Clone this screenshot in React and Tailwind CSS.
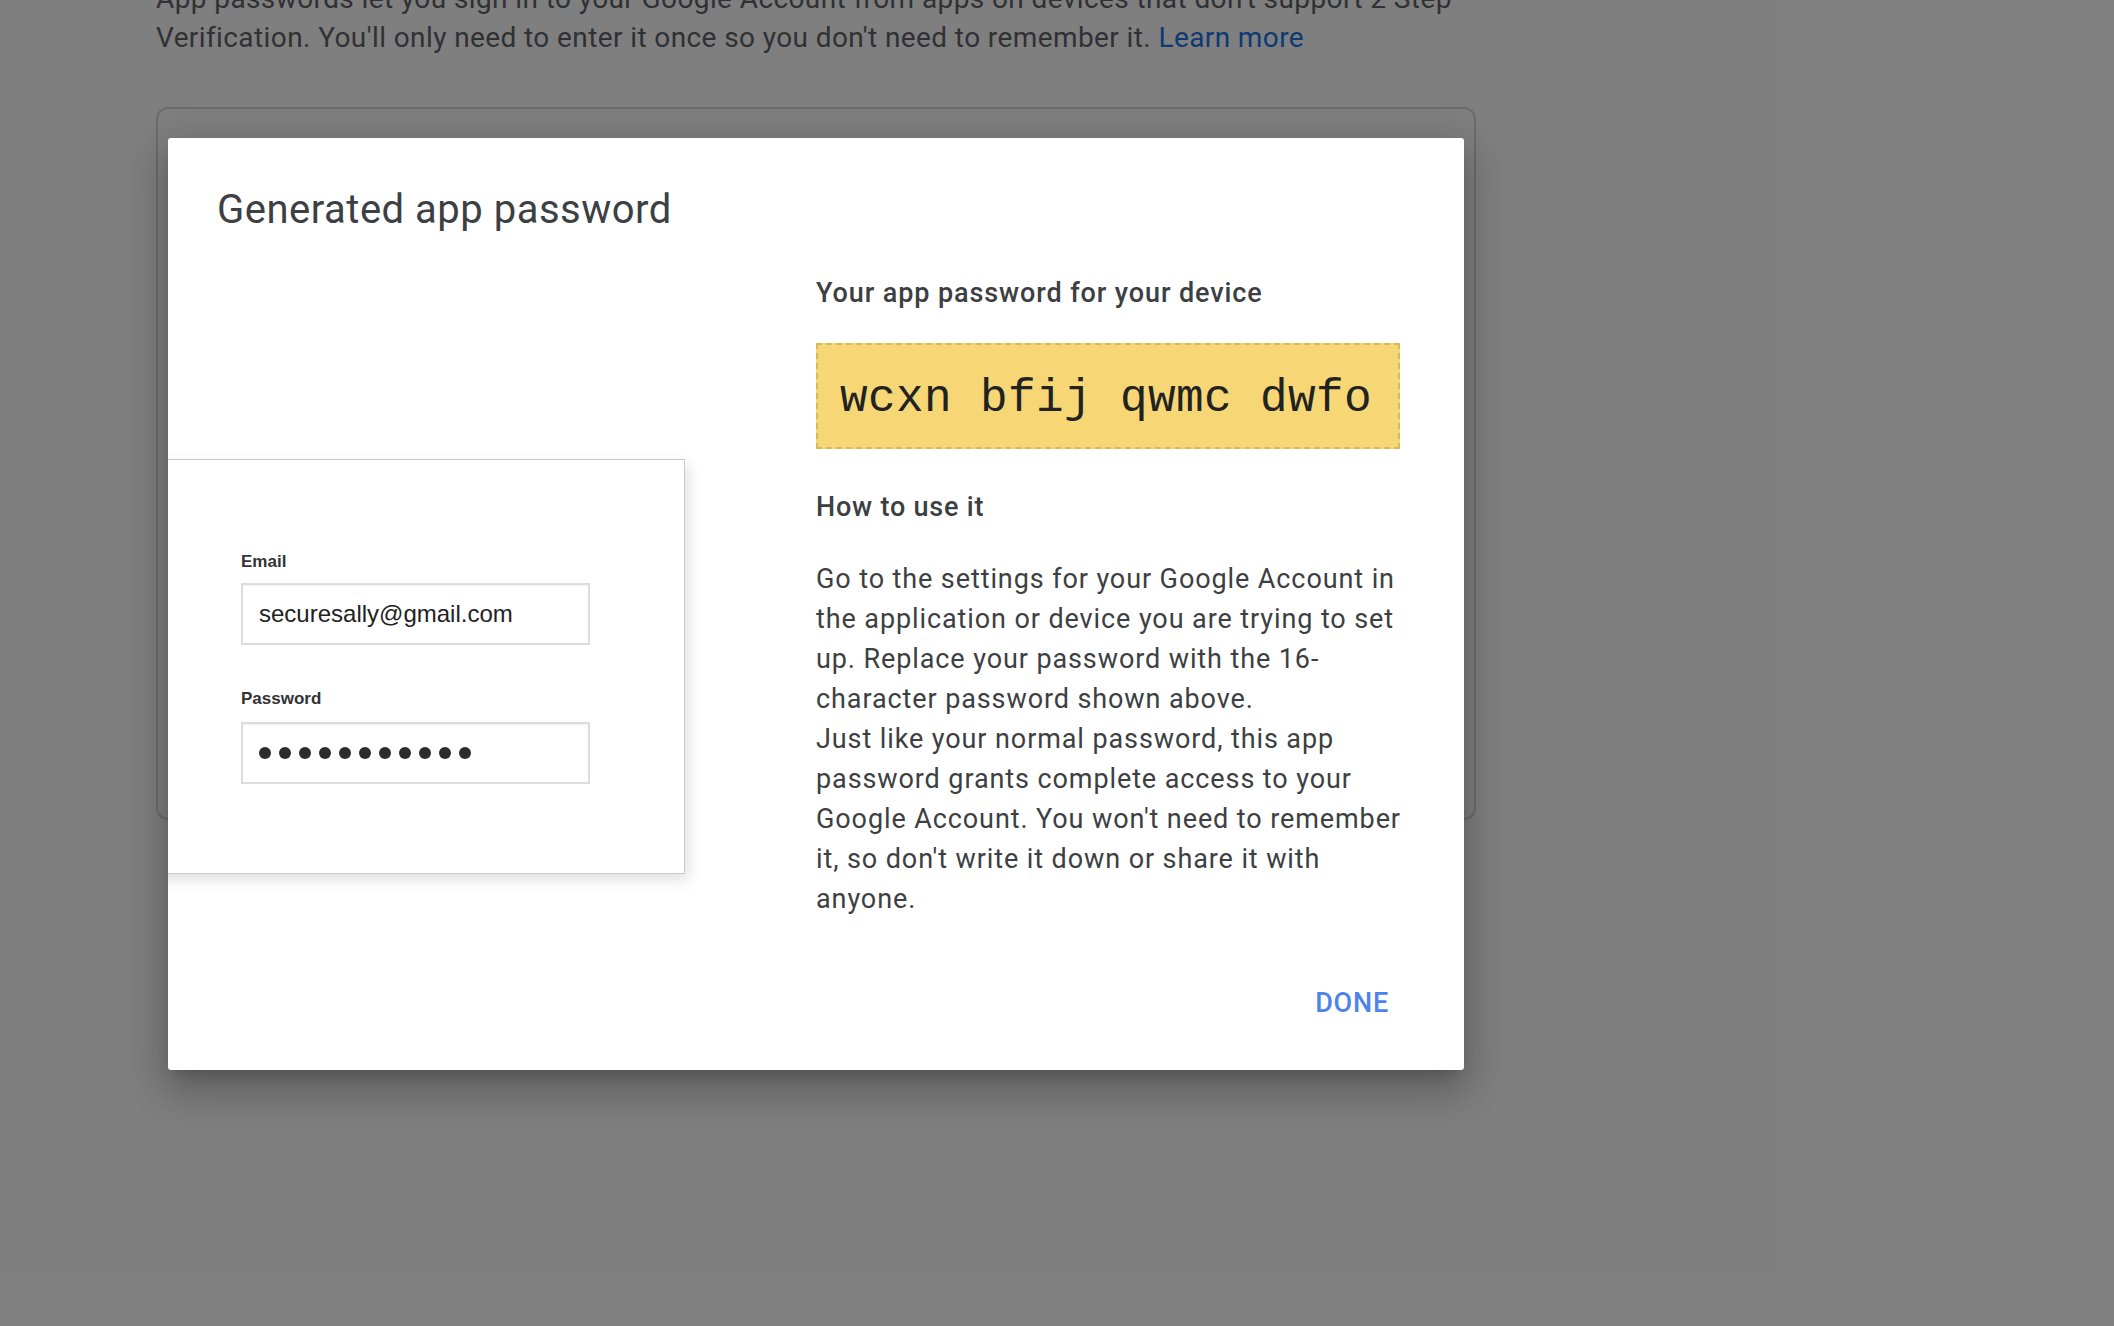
export default function App() {
  const dots = Array.from({ length: 11 });
  return (
    <div className="relative min-h-[1326px] w-full overflow-hidden bg-white" style={{ fontFamily: 'Roboto, "Noto Sans", sans-serif' }}>
      {/* Underlying page */}
      <div className="pl-[156px]">
        <p className="-mt-[21px] text-[28px] leading-[39px] tracking-[0.4px] text-[#5f6368]">
          App passwords let you sign in to your Google Account from apps on devices that don't support 2 Step
          <br />
          Verification. You'll only need to enter it once so you don't need to remember it.{' '}
          <span className="text-[#1a73e8]">Learn more</span>
        </p>
        <div className="mt-[50px] h-[713px] w-[1320px] rounded-[12px] border-2 border-[#d6d8dc]" />
      </div>

      {/* Overlay */}
      <div className="absolute inset-0 bg-black/50" />

      {/* Dialog */}
      <div className="absolute left-[168px] top-[138px] flex w-[1296px] flex-col overflow-hidden rounded-[3px] bg-white pt-[48px] pb-[49px] shadow-[0_24px_38px_3px_rgba(0,0,0,0.14),0_9px_46px_8px_rgba(0,0,0,0.12),0_11px_15px_-7px_rgba(0,0,0,0.2)]">
        <h2 className="pl-[49px] text-[40px] leading-[48px] tracking-[0.5px] text-[#3c4043]">Generated app password</h2>

        <div className="mt-[41px] flex">
          {/* Left illustration */}
          <div className="w-[648px] shrink-0">
            <div className="-ml-[40px] mt-[184px] h-[415px] w-[557px] border border-[#c9c9c9] bg-white pl-[112px] pt-[92px] shadow-[4px_6px_14px_rgba(0,0,0,0.12)]" style={{ fontFamily: '"Liberation Sans", Arial, sans-serif' }}>
              <div className="text-[17px] font-bold leading-[20px] text-[#333]">Email</div>
              <div className="mt-[11px] flex h-[62px] w-[349px] items-center border-2 border-[#dcdcdc] pl-[16px] shadow-[inset_0_1px_2px_rgba(0,0,0,0.06)]">
                <span className="text-[24px] leading-[28px] text-[#222]">securesally@gmail.com</span>
              </div>
              <div className="mt-[44px] text-[17px] font-bold leading-[20px] text-[#333]">Password</div>
              <div className="mt-[13px] flex h-[62px] w-[349px] items-center gap-[8px] border-2 border-[#dcdcdc] pl-[16px] shadow-[inset_0_1px_2px_rgba(0,0,0,0.06)]">
                {dots.map((_, i) => (
                  <span key={i} className="block h-[12px] w-[12px] rounded-full bg-[#2b2b2b]" />
                ))}
              </div>
            </div>
          </div>

          {/* Right column */}
          <div className="w-[590px] shrink-0 text-[#3c4043]">
            <div className="text-[27px] font-medium leading-[36px] tracking-[0.9px]">Your app password for your device</div>
            <div className="mt-[32px] flex h-[106px] w-[584px] items-center border-2 border-dashed border-[#d6b95c] bg-[#f6d675] pl-[22px] pt-[6px]">
              <span className="text-[46px] leading-[52px] tracking-[0.4px] text-[#222]" style={{ fontFamily: '"Courier New", "Liberation Mono", monospace' }}>
                wcxn bfij qwmc dwfo
              </span>
            </div>
            <div className="mt-[40px] text-[27px] font-medium leading-[36px] tracking-[0.8px]">How to use it</div>
            <div className="mt-[34px] text-[27px] leading-[40px] tracking-[0.9px]">
              <p>Go to the settings for your Google Account in the application or device you are trying to set up. Replace your password with the 16-character password shown above.</p>
              <p>Just like your normal password, this app password grants complete access to your Google Account. You won't need to remember it, so don't write it down or share it with anyone.</p>
            </div>
          </div>
        </div>

        <div className="mt-[66px] flex justify-end pr-[75px]">
          <button className="text-[27px] font-medium leading-[36px] tracking-[0.8px] text-[#4d84ec]">DONE</button>
        </div>
      </div>
    </div>
  );
}
